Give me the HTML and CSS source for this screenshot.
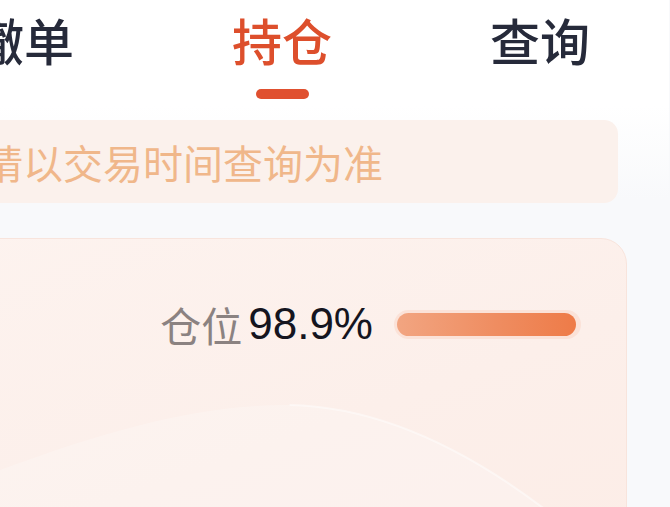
FILE: index.html
```html
<!DOCTYPE html>
<html lang="zh-CN">
<head>
  <meta charset="UTF-8">
  <meta name="viewport" content="width=device-width, initial-scale=1.0">
  <title>持仓</title>
  <link rel="stylesheet" href="styles.css">
</head>
<body>
  <div class="page">
    <!-- 顶部标签 -->
    <header class="tabs">
      <div class="tab">撤单</div>
      <div class="tab active">持仓<span class="tab-line"></span></div>
      <div class="tab">查询</div>
    </header>

    <div class="notice">请以交易时间查询为准</div>

    <!-- 持仓卡片 -->
    <section class="card">
      <svg class="card-wave" viewBox="0 0 640 420" preserveAspectRatio="none">
        <path d="M0 262 C 140 200, 240 165, 335 166 C 430 168, 520 225, 600 300 L 640 340 L 640 420 L 0 420 Z" fill="#ffffff" fill-opacity="0.22"/>
        <path d="M335 166 C 430 168, 520 225, 600 300 L 640 340" fill="none" stroke="#ffffff" stroke-opacity="0.45" stroke-width="2"/>
      </svg>
      <div class="position-row">
        <span class="position-label">仓位</span>
        <span class="position-value">98.9%</span>
        <div class="progress">
          <div class="progress-fill" style="width: 98.9%"></div>
        </div>
      </div>
    </section>
  </div>
</body>
</html>
```

FILE: styles.css
```css
body {
  margin: 0;
  background: #f8f9fb;
  font-family: "Liberation Sans", "Noto Sans CJK SC", sans-serif;
  overflow: hidden;
}
.page {
  width: 774px;
  margin-left: -105px;
  height: 507px;
  background: linear-gradient(#ffffff 0, #ffffff 105px, #f8f9fb 200px);
}
.tabs {
  display: flex;
  padding-top: 8px;
  height: 99px;
  box-sizing: border-box;
}
.tab {
  flex: 1;
  display: flex;
  flex-direction: column;
  align-items: center;
  font-family: "Noto Sans CJK SC", sans-serif;
  font-size: 50px;
  font-weight: 500;
  line-height: 62px;
  color: #262a3a;
}
.tab.active {
  color: #dd4f2c;
}
.tab-line {
  display: block;
  width: 53px;
  height: 10px;
  margin-top: 19px;
  border-radius: 5px;
  background: #e0502f;
}
.notice {
  display: flex;
  align-items: center;
  height: 83px;
  margin: 21px 51px 0 24px;
  padding-left: 64px;
  border-radius: 14px;
  background: #fbf1ec;
  color: #f0b78a;
  font-family: "Noto Sans CJK SC", sans-serif;
  font-size: 40px;
}
.card {
  position: relative;
  height: 300px;
  margin: 35px 42px 0 24px;
  border: 1px solid #f8e4dc;
  border-radius: 26px;
  background: linear-gradient(160deg, #fdf3ef 0%, #fcefea 60%, #fcede7 100%);
  overflow: hidden;
}
.card-wave {
  position: absolute;
  left: 0;
  top: 0;
  width: 100%;
  height: 420px;
}
.position-row {
  position: relative;
  display: flex;
  justify-content: flex-end;
  align-items: center;
  padding: 65px 45px 0 0;
  height: 40px;
}
.position-label {
  font-family: "Noto Sans CJK SC", sans-serif;
  font-size: 41px;
  color: #8b8281;
  margin-right: 6px;
}
.position-value {
  font-size: 44px;
  color: #15151f;
  margin-right: 21px;
}
.progress {
  width: 187px;
  height: 29px;
  padding: 3px;
  box-sizing: border-box;
  border-radius: 15px;
  background: #fbe2d8;
}
.progress-fill {
  height: 100%;
  border-radius: 12px;
  background: linear-gradient(90deg, #f2a581 0%, #ef8d61 55%, #ee7b48 100%);
}
```
